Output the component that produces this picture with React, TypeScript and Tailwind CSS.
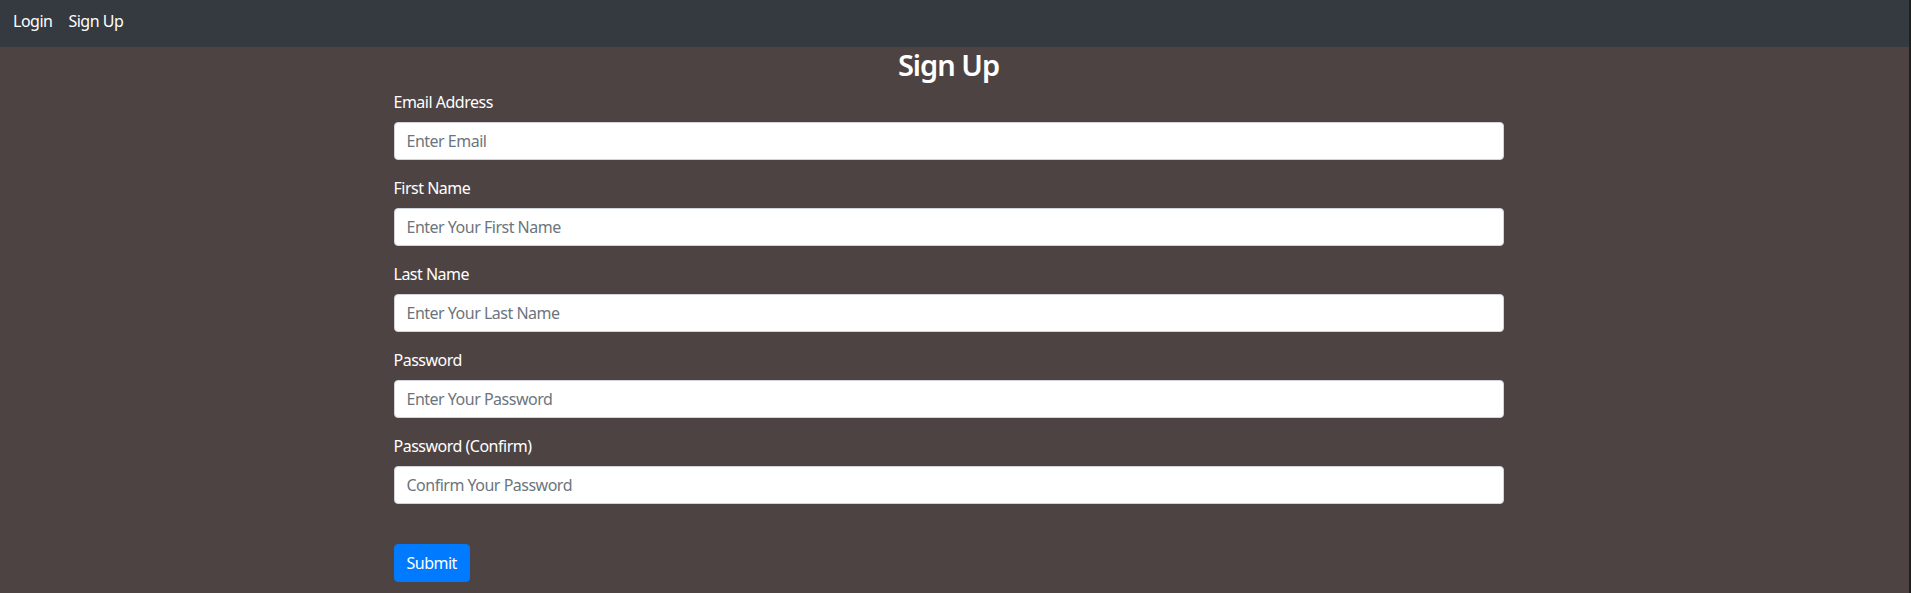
import React from 'react';

const fields = [
    { label: 'Email Address', placeholder: 'Enter Email', type: 'email' },
    { label: 'First Name', placeholder: 'Enter Your First Name', type: 'text' },
    { label: 'Last Name', placeholder: 'Enter Your Last Name', type: 'text' },
    { label: 'Password', placeholder: 'Enter Your Password', type: 'password' },
    { label: 'Password (Confirm)', placeholder: 'Confirm Your Password', type: 'password' },
];

const App: React.FC = () => {
    return (
        <div className="flex min-h-[593px] bg-[#4e4343] font-['Noto_Sans',sans-serif] text-white tracking-[-0.5px]">
            <div className="flex-1 flex flex-col">
                <nav className="h-[47px] bg-[#343a40] flex items-center pl-[5px] pb-[6px]">
                    <a href="#" className="px-2 text-[16px] leading-6 text-white">Login</a>
                    <a href="#" className="px-2 text-[16px] leading-6 text-white">Sign Up</a>
                </nav>
                <main className="pr-[12px]">
                    <div className="max-w-[1140px] mx-auto px-[15px]">
                        <h2 className="text-center text-[29px] font-semibold leading-[35px] tracking-[-1px] mb-2">Sign Up</h2>
                        <form onSubmit={e => e.preventDefault()}>
                            {fields.map(f => (
                                <div key={f.label} className="mb-4">
                                    <label className="block text-[16px] leading-6 mb-2">{f.label}</label>
                                    <input
                                        type={f.type}
                                        placeholder={f.placeholder}
                                        className="block w-full h-[38px] px-3 py-[6px] text-[16px] leading-6 text-[#495057] bg-white border border-[#ced4da] rounded-[4px] placeholder:text-[#6c757d] outline-none"
                                    />
                                </div>
                            ))}
                            <div className="pt-6">
                                <button type="submit" className="h-[38px] px-3 text-[16px] leading-6 text-white bg-[#007bff] border border-[#007bff] rounded-[4px]">
                                    Submit
                                </button>
                            </div>
                        </form>
                    </div>
                </main>
            </div>
            <div className="w-[2px] bg-[#1f1f1f]" />
        </div>
    );
};

export default App;
